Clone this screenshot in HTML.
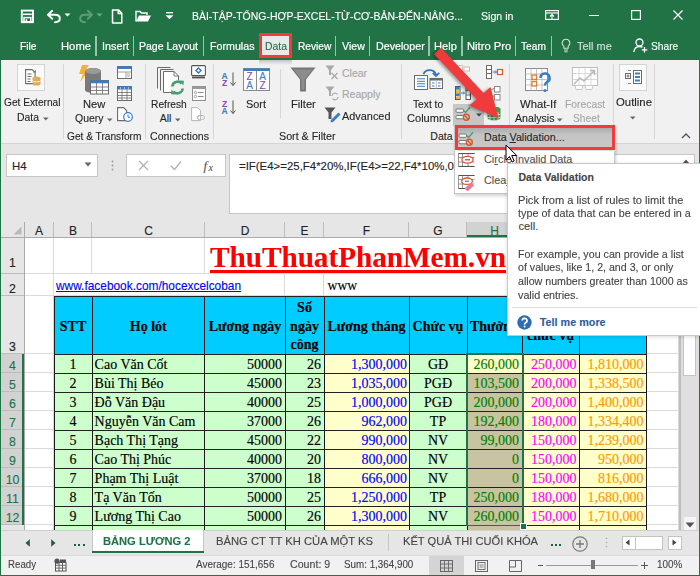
<!DOCTYPE html>
<html><head><meta charset="utf-8"><style>
html,body{margin:0;padding:0;}
body{width:700px;height:576px;overflow:hidden;position:relative;background:#fff;font-family:"Liberation Sans",sans-serif;}
#r>div{position:absolute;}
#r>div{-webkit-text-stroke:0.12px currentColor;}
</style></head><body><div id="r">
<div style="left:0px;top:0px;width:700px;height:60px;background:#217346;"></div>
<svg style="position:absolute;left:20px;top:9px;" width="15" height="15" viewBox="0 0 15 15"><rect x="1.8" y="1.6" width="11.2" height="11.6" fill="none" stroke="#ffffff" stroke-width="1.9"/><path d="M3 5.3h8.8" stroke="#ffffff" stroke-width="1.6"/><rect x="4" y="8.6" width="6.8" height="4.2" fill="none" stroke="#ffffff" stroke-width="1.5"/><rect x="5.6" y="10.2" width="1.6" height="2.6" fill="#ffffff"/></svg>
<svg style="position:absolute;left:46px;top:9px;" width="16" height="15" viewBox="0 0 16 15"><path d="M6.2 1.8 L2 5.8 L6.2 9.8" fill="none" stroke="#ffffff" stroke-width="1.9" stroke-linecap="round" stroke-linejoin="round"/><path d="M2.5 5.8 H9 Q13.8 5.8 13.8 9.5 Q13.8 13.2 9 13.2" fill="none" stroke="#ffffff" stroke-width="1.9" stroke-linecap="round"/></svg>
<svg style="position:absolute;left:64px;top:13px;" width="7" height="4" viewBox="0 0 7 4"><path d="M0.5 0.5h6l-3 3z" fill="#ffffff"/></svg>
<svg style="position:absolute;left:78px;top:9px;" width="16" height="15" viewBox="0 0 16 15"><path d="M9.8 1.8 L14 5.8 L9.8 9.8" fill="none" stroke="#5e9d78" stroke-width="1.9" stroke-linecap="round" stroke-linejoin="round"/><path d="M13.5 5.8 H7 Q2.2 5.8 2.2 9.5 Q2.2 13.2 7 13.2" fill="none" stroke="#5e9d78" stroke-width="1.9" stroke-linecap="round"/></svg>
<svg style="position:absolute;left:96px;top:13px;" width="7" height="4" viewBox="0 0 7 4"><path d="M0.5 0.5h6l-3 3z" fill="#6fa786"/></svg>
<svg style="position:absolute;left:111px;top:9px;" width="12" height="15" viewBox="0 0 12 15"><path d="M1.5 0.9h6l3.3 3.3v9.9h-9.3z M7.2 0.9v3.6h3.6" fill="none" stroke="#ffffff" stroke-width="1.5" stroke-linejoin="round"/></svg>
<svg style="position:absolute;left:135px;top:9px;" width="17" height="14" viewBox="0 0 17 14"><path d="M1 12.5V2.5h4l1.5 1.5h5.5v2" fill="none" stroke="#ffffff" stroke-width="1.4"/><path d="M1 12.5l3-6h12l-3 6z" fill="#ffffff"/></svg>
<svg style="position:absolute;left:165px;top:12px;" width="9" height="8" viewBox="0 0 9 8"><rect x="1" y="0" width="7" height="1.4" fill="#ffffff"/><path d="M0.5 3.2h8l-4 4z" fill="#ffffff"/></svg>
<div style="left:192px;top:11.19px;font:normal 11px/11px 'Liberation Sans',sans-serif;color:#ffffff;white-space:nowrap;transform:scaleX(0.9511);transform-origin:0 0;">BÀI-TẬP-TỔNG-HỢP-EXCEL-TỪ-CƠ-BẢN-ĐẾN-NÂNG...</div>
<div style="left:481px;top:11.19px;font:normal 11px/11px 'Liberation Sans',sans-serif;color:#ffffff;white-space:nowrap;transform:scaleX(0.9663);transform-origin:0 0;">Sign in</div>
<svg style="position:absolute;left:545px;top:10px;" width="14" height="10" viewBox="0 0 14 10"><rect x="0.6" y="0.6" width="12.8" height="8.8" fill="none" stroke="#ffffff" stroke-width="1.2"/><line x1="0.6" y1="3" x2="13.4" y2="3" stroke="#ffffff" stroke-width="1.2"/><path d="M7 4.5v4.5 M5 6.5l2-2 2 2" stroke="#ffffff" stroke-width="1.1" fill="none"/></svg>
<div style="left:589px;top:14.5px;width:10px;height:1.2px;background:#ffffff;"></div>
<svg style="position:absolute;left:631px;top:10px;" width="10" height="10" viewBox="0 0 10 10"><rect x="0.6" y="0.6" width="8.8" height="8.8" fill="none" stroke="#ffffff" stroke-width="1.2"/></svg>
<svg style="position:absolute;left:673px;top:10px;" width="10" height="10" viewBox="0 0 10 10"><path d="M0.5 0.5l9 9 M9.5 0.5l-9 9" stroke="#ffffff" stroke-width="1.2"/></svg>
<div style="left:19.5px;top:41.19px;font:normal 11px/11px 'Liberation Sans',sans-serif;color:#ffffff;white-space:nowrap;transform:scaleX(0.9309);transform-origin:0 0;-webkit-text-stroke:0.2px #fff;">File</div>
<div style="left:61.3px;top:41.19px;font:normal 11px/11px 'Liberation Sans',sans-serif;color:#ffffff;white-space:nowrap;transform:scaleX(1.0224);transform-origin:0 0;-webkit-text-stroke:0.2px #fff;">Home</div>
<div style="left:101.8px;top:41.19px;font:normal 11px/11px 'Liberation Sans',sans-serif;color:#ffffff;white-space:nowrap;transform:scaleX(0.9814);transform-origin:0 0;-webkit-text-stroke:0.2px #fff;">Insert</div>
<div style="left:139.3px;top:41.19px;font:normal 11px/11px 'Liberation Sans',sans-serif;color:#ffffff;white-space:nowrap;transform:scaleX(0.9551);transform-origin:0 0;-webkit-text-stroke:0.2px #fff;">Page Layout</div>
<div style="left:209.5px;top:41.19px;font:normal 11px/11px 'Liberation Sans',sans-serif;color:#ffffff;white-space:nowrap;transform:scaleX(0.9707);transform-origin:0 0;-webkit-text-stroke:0.2px #fff;">Formulas</div>
<div style="left:297.5px;top:41.19px;font:normal 11px/11px 'Liberation Sans',sans-serif;color:#ffffff;white-space:nowrap;transform:scaleX(0.9233);transform-origin:0 0;-webkit-text-stroke:0.2px #fff;">Review</div>
<div style="left:342px;top:41.19px;font:normal 11px/11px 'Liberation Sans',sans-serif;color:#ffffff;white-space:nowrap;transform:scaleX(0.9647);transform-origin:0 0;-webkit-text-stroke:0.2px #fff;">View</div>
<div style="left:375.7px;top:41.19px;font:normal 11px/11px 'Liberation Sans',sans-serif;color:#ffffff;white-space:nowrap;transform:scaleX(0.9733);transform-origin:0 0;-webkit-text-stroke:0.2px #fff;">Developer</div>
<div style="left:433.7px;top:41.19px;font:normal 11px/11px 'Liberation Sans',sans-serif;color:#ffffff;white-space:nowrap;transform:scaleX(1.0078);transform-origin:0 0;-webkit-text-stroke:0.2px #fff;">Help</div>
<div style="left:466.6px;top:41.19px;font:normal 11px/11px 'Liberation Sans',sans-serif;color:#ffffff;white-space:nowrap;transform:scaleX(1.0185);transform-origin:0 0;-webkit-text-stroke:0.2px #fff;">Nitro Pro</div>
<div style="left:520.9px;top:41.19px;font:normal 11px/11px 'Liberation Sans',sans-serif;color:#ffffff;white-space:nowrap;transform:scaleX(0.9247);transform-origin:0 0;-webkit-text-stroke:0.2px #fff;">Team</div>
<div style="left:95.3px;top:35.5px;width:1.4px;height:20px;background:#9cc2ab;"></div>
<div style="left:133.10000000000002px;top:35.5px;width:1.4px;height:20px;background:#9cc2ab;"></div>
<div style="left:203.10000000000002px;top:35.5px;width:1.4px;height:20px;background:#9cc2ab;"></div>
<div style="left:335.1px;top:35.5px;width:1.4px;height:20px;background:#9cc2ab;"></div>
<div style="left:368.90000000000003px;top:35.5px;width:1.4px;height:20px;background:#9cc2ab;"></div>
<div style="left:428.40000000000003px;top:35.5px;width:1.4px;height:20px;background:#9cc2ab;"></div>
<div style="left:461.2px;top:35.5px;width:1.4px;height:20px;background:#9cc2ab;"></div>
<div style="left:515.0px;top:35.5px;width:1.4px;height:20px;background:#9cc2ab;"></div>
<div style="left:551.0999999999999px;top:35.5px;width:1.4px;height:20px;background:#9cc2ab;"></div>
<div style="left:259px;top:33px;width:33px;height:25px;background:#e9e9e9;box-shadow:inset 0 0 3px #fafafa;"></div>
<div style="left:265px;top:41.19px;font:normal 11px/11px 'Liberation Sans',sans-serif;color:#217346;white-space:nowrap;transform:scaleX(0.9468);transform-origin:0 0;">Data</div>
<div style="left:258.5px;top:32.8px;width:33.5px;height:25.2px;background:none;border:3px solid #f43b3b;box-sizing:border-box;"></div>
<svg style="position:absolute;left:561px;top:38px;" width="10" height="15" viewBox="0 0 10 15"><path d="M5 1.2a3.8 3.8 0 0 0-2.2 6.9v2.2h4.4v-2.2A3.8 3.8 0 0 0 5 1.2z" fill="none" stroke="#d2e3d9" stroke-width="1.1"/><path d="M3 12h4 M3.5 13.8h3" stroke="#d2e3d9" stroke-width="1.1"/></svg>
<div style="left:576.5px;top:41.19px;font:normal 11px/11px 'Liberation Sans',sans-serif;color:#cfe0d6;white-space:nowrap;transform:scaleX(0.9983);transform-origin:0 0;">Tell me</div>
<svg style="position:absolute;left:633px;top:38px;" width="15" height="15" viewBox="0 0 15 15"><circle cx="6.5" cy="4.5" r="3.5" fill="none" stroke="#ffffff" stroke-width="1.3"/><path d="M0.8 14c0.5-3.5 2.8-5.5 5.7-5.5 1.2 0 2.2 0.3 3 0.8" fill="none" stroke="#ffffff" stroke-width="1.3"/><path d="M11.5 9v5.5 M8.8 11.8h5.5" stroke="#ffffff" stroke-width="1.3"/></svg>
<div style="left:650.6px;top:41.19px;font:normal 11px/11px 'Liberation Sans',sans-serif;color:#ffffff;white-space:nowrap;transform:scaleX(0.9267);transform-origin:0 0;">Share</div>
<div style="left:0px;top:60px;width:700px;height:83px;background:#f1f1f1;"></div>
<div style="left:0px;top:143px;width:700px;height:1px;background:#d5d5d5;"></div>
<div style="left:259px;top:60px;width:33px;height:5px;background:linear-gradient(#c4c4c4, rgba(241,241,241,0));"></div>
<div style="left:63.3px;top:64px;width:1px;height:75px;background:#d6d6d6;"></div>
<div style="left:145.3px;top:64px;width:1px;height:75px;background:#d6d6d6;"></div>
<div style="left:213px;top:64px;width:1px;height:75px;background:#d6d6d6;"></div>
<div style="left:400.6px;top:64px;width:1px;height:75px;background:#d6d6d6;"></div>
<div style="left:508.7px;top:64px;width:1px;height:75px;background:#d6d6d6;"></div>
<div style="left:612.7px;top:64px;width:1px;height:75px;background:#d6d6d6;"></div>
<div style="left:654.3px;top:64px;width:1px;height:75px;background:#d6d6d6;"></div>
<div style="left:279.5px;top:69px;width:1px;height:49px;background:#d6d6d6;"></div>
<div style="left:17px;top:63.5px;width:28px;height:27.5px;background:#fafafa;border:1px solid #d4d4d4;box-sizing:border-box;"></div>
<svg style="position:absolute;left:25px;top:69px;" width="16" height="17" viewBox="0 0 16 17"><path d="M0.6 0.6h6.5l3 3v11h-9.5z" fill="#fff" stroke="#6b6b6b" stroke-width="1.1"/><path d="M2.5 5h4 M2.5 7.5h4 M2.5 10h3 M2.5 12.5h3" stroke="#6b6b6b" stroke-width="1"/><path d="M8 3.5l2.5-2 v2" fill="none" stroke="#6b6b6b" stroke-width="0.8"/><ellipse cx="11.5" cy="9" rx="4" ry="1.6" fill="#e3aa58"/><path d="M7.5 9v6a4 1.6 0 0 0 8 0v-6z" fill="#e3aa58"/><path d="M7.5 11.5a4 1.4 0 0 0 8 0" fill="none" stroke="#fff" stroke-width="0.8"/></svg>
<div style="left:3.6px;top:97.11px;font:normal 10.5px/10.5px 'Liberation Sans',sans-serif;color:#262626;white-space:nowrap;transform:scaleX(0.9681);transform-origin:0 0;">Get External</div>
<div style="left:17.2px;top:111.61px;font:normal 10.5px/10.5px 'Liberation Sans',sans-serif;color:#262626;white-space:nowrap;transform:scaleX(0.9919);transform-origin:0 0;">Data</div>
<svg style="position:absolute;left:43px;top:116.5px;" width="6" height="4" viewBox="0 0 6 4"><path d="M0 0.5h5.5l-2.75 3z" fill="#666"/></svg>
<svg style="position:absolute;left:77px;top:64px;" width="33" height="31" viewBox="0 0 33 31"><path d="M5 1h7l-4 6h4l-9 11 3-8h-4z" fill="#f1b33b"/><ellipse cx="16" cy="7" rx="8" ry="3" fill="#7a7a7a"/><path d="M8 7v19a8 3 0 0 0 16 0v-19z" fill="#7a7a7a"/><ellipse cx="16" cy="7" rx="8" ry="3" fill="#9a9a9a"/><rect x="13.5" y="16.5" width="18" height="13.5" fill="#fff" stroke="#6b6b6b" stroke-width="1"/><rect x="13.5" y="16.5" width="18" height="2.8" fill="#3a7fc6"/><path d="M13.5 23h18 M13.5 26.5h18 M19.5 19v11 M25.5 19v11" stroke="#6b6b6b" stroke-width="0.8"/></svg>
<div style="left:82.7px;top:98.81px;font:normal 10.5px/10.5px 'Liberation Sans',sans-serif;color:#262626;white-space:nowrap;transform:scaleX(1.0616);transform-origin:0 0;">New</div>
<div style="left:75.3px;top:113.11px;font:normal 10.5px/10.5px 'Liberation Sans',sans-serif;color:#262626;white-space:nowrap;transform:scaleX(0.9967);transform-origin:0 0;">Query</div>
<svg style="position:absolute;left:106.5px;top:117.5px;" width="6" height="4" viewBox="0 0 6 4"><path d="M0 0.5h5.5l-2.75 3z" fill="#666"/></svg>
<svg style="position:absolute;left:117px;top:66px;" width="15" height="13" viewBox="0 0 15 13"><rect x="0.5" y="0.5" width="14" height="12" fill="#fff" stroke="#6b6b6b"/><rect x="0.5" y="0.5" width="14" height="2.5" fill="#3a7fc6"/><path d="M1 6h13 M9 6v6 M10 8h3 M10 10h3" stroke="#8a8a8a" stroke-width="0.8"/></svg>
<svg style="position:absolute;left:117px;top:86px;" width="15" height="15" viewBox="0 0 15 15"><rect x="0.5" y="0.5" width="14" height="14" fill="#fff" stroke="#6b6b6b"/><rect x="0.5" y="0.5" width="14" height="3" fill="#3a7fc6"/><path d="M1 6.5h13 M1 9.5h13 M1 12h13 M5 3.5v11 M10 3.5v11" stroke="#6b6b6b" stroke-width="0.8"/><path d="M3 2h1 M7 2h1 M11 2h1" stroke="#fff"/></svg>
<svg style="position:absolute;left:117px;top:107px;" width="16" height="15" viewBox="0 0 16 15"><path d="M0.6 0.6h6l3 3v10h-9z" fill="#fff" stroke="#6b6b6b" stroke-width="1.1"/><circle cx="11" cy="10" r="4.3" fill="#fff" stroke="#3a7fc6" stroke-width="1.2"/><path d="M11 7.5v2.7h2" fill="none" stroke="#3a7fc6" stroke-width="1"/></svg>
<div style="left:67px;top:131.11px;font:normal 10.5px/10.5px 'Liberation Sans',sans-serif;color:#262626;white-space:nowrap;transform:scaleX(0.9665);transform-origin:0 0;">Get &amp; Transform</div>
<svg style="position:absolute;left:156px;top:66px;" width="30" height="30" viewBox="0 0 30 30"><path d="M1.5 22.5V1.5h13" fill="none" stroke="#6b6b6b" stroke-width="1"/><path d="M4.5 24.5V3.5h13" fill="none" stroke="#6b6b6b" stroke-width="1"/><path d="M7.5 26.5V5.5h10.5l4.5 4.5v16.5z" fill="#fff" stroke="#6b6b6b" stroke-width="1"/><path d="M18 5.5v4.5h4.5" fill="none" stroke="#6b6b6b" stroke-width="0.9"/><circle cx="21.5" cy="21.5" r="7.5" fill="#f1f1f1"/><path d="M16.3 20.5a5.3 5.3 0 0 1 9.3-3" fill="none" stroke="#4a9a78" stroke-width="2.6"/><path d="M23.5 14.5l4.5 0.3-0.6 4.6z" fill="#4a9a78"/><path d="M26.7 22.5a5.3 5.3 0 0 1-9.3 3" fill="none" stroke="#4a9a78" stroke-width="2.6"/><path d="M19.5 28.5l-4.5-0.3 0.6-4.6z" fill="#4a9a78"/></svg>
<div style="left:150.7px;top:98.81px;font:normal 10.5px/10.5px 'Liberation Sans',sans-serif;color:#262626;white-space:nowrap;transform:scaleX(0.9737);transform-origin:0 0;">Refresh</div>
<div style="left:150.5px;width:30px;text-align:center;top:113.11px;font:normal 10.5px/10.5px 'Liberation Sans',sans-serif;color:#262626;white-space:nowrap;">All</div>
<svg style="position:absolute;left:174.5px;top:117.5px;" width="6" height="4" viewBox="0 0 6 4"><path d="M0 0.5h5.5l-2.75 3z" fill="#666"/></svg>
<svg style="position:absolute;left:191px;top:65px;" width="15" height="14" viewBox="0 0 15 14"><rect x="0.6" y="0.6" width="13.8" height="10" rx="1" fill="#fff" stroke="#555" stroke-width="1.1"/><path d="M1 12.5h13" stroke="#555" stroke-width="1.8"/><path d="M7.5 3l2.5 2.5-2.5 2.5-2.5-2.5z" fill="none" stroke="#2f74c0" stroke-width="1.4"/></svg>
<svg style="position:absolute;left:192px;top:86px;" width="14" height="15" viewBox="0 0 14 15"><rect x="0.5" y="0.5" width="13" height="14" fill="#fff" stroke="#8f8f8f"/><rect x="0.5" y="0.5" width="13" height="2.5" fill="#9a9a9a"/><circle cx="3.5" cy="6.5" r="1.2" fill="none" stroke="#9a9a9a" stroke-width="0.9"/><circle cx="3.5" cy="10.5" r="1.2" fill="none" stroke="#9a9a9a" stroke-width="0.9"/><path d="M6 6.5h5.5 M6 10.5h5.5" stroke="#8a8a8a" stroke-width="1.1"/></svg>
<svg style="position:absolute;left:191px;top:107px;" width="15" height="15" viewBox="0 0 15 15"><path d="M0.6 0.6h6l3 3v10h-9z" fill="#fff" stroke="#b5b5b5" stroke-width="1"/><path d="M7 10.5a2 2 0 0 1 2-2h2.5a2 2 0 0 1 0 4h-1 M9.5 12.5h-1a2 2 0 0 1 0-4" fill="none" stroke="#b5b5b5" stroke-width="1"/></svg>
<div style="left:149.5px;top:131.11px;font:normal 10.5px/10.5px 'Liberation Sans',sans-serif;color:#262626;white-space:nowrap;transform:scaleX(1.0108);transform-origin:0 0;">Connections</div>
<div style="left:218.5px;width:12px;text-align:center;top:71.80px;font:bold 8.5px/8.5px 'Liberation Sans',sans-serif;color:#3a7fc6;white-space:nowrap;">A</div>
<div style="left:218.5px;width:12px;text-align:center;top:78.80px;font:bold 8.5px/8.5px 'Liberation Sans',sans-serif;color:#8a4bb5;white-space:nowrap;">Z</div>
<svg style="position:absolute;left:229.5px;top:72px;" width="6" height="15" viewBox="0 0 6 15"><path d="M3 0.5v13 M0.5 10.5l2.5 3 2.5-3" fill="none" stroke="#555" stroke-width="1"/></svg>
<div style="left:218.5px;width:12px;text-align:center;top:99.80px;font:bold 8.5px/8.5px 'Liberation Sans',sans-serif;color:#8a4bb5;white-space:nowrap;">Z</div>
<div style="left:218.5px;width:12px;text-align:center;top:106.80px;font:bold 8.5px/8.5px 'Liberation Sans',sans-serif;color:#3a7fc6;white-space:nowrap;">A</div>
<svg style="position:absolute;left:229.5px;top:100px;" width="6" height="15" viewBox="0 0 6 15"><path d="M3 0.5v13 M0.5 10.5l2.5 3 2.5-3" fill="none" stroke="#555" stroke-width="1"/></svg>
<svg style="position:absolute;left:242.5px;top:68px;" width="27" height="23" viewBox="0 0 27 23"><rect x="0.5" y="0.5" width="26" height="22" fill="#fff" stroke="#8a8a8a"/><rect x="0.5" y="0.5" width="26" height="2.5" fill="#3a7fc6"/><line x1="13.5" y1="3" x2="13.5" y2="22.5" stroke="#8a8a8a"/></svg>
<div style="left:243.5px;width:12px;text-align:center;top:71.53px;font:normal 10px/10px 'Liberation Sans',sans-serif;color:#8a4bb5;white-space:nowrap;">Z</div>
<div style="left:243.5px;width:12px;text-align:center;top:81.03px;font:normal 10px/10px 'Liberation Sans',sans-serif;color:#3a7fc6;white-space:nowrap;">A</div>
<div style="left:256.5px;width:12px;text-align:center;top:71.53px;font:normal 10px/10px 'Liberation Sans',sans-serif;color:#3a7fc6;white-space:nowrap;">A</div>
<div style="left:256.5px;width:12px;text-align:center;top:81.03px;font:normal 10px/10px 'Liberation Sans',sans-serif;color:#8a4bb5;white-space:nowrap;">Z</div>
<div style="left:246px;top:98.81px;font:normal 10.5px/10.5px 'Liberation Sans',sans-serif;color:#262626;white-space:nowrap;transform:scaleX(1.0386);transform-origin:0 0;">Sort</div>
<svg style="position:absolute;left:290px;top:67px;" width="26" height="25" viewBox="0 0 26 25"><path d="M0.5 0.5h25l-9.5 12v12h-6v-12z" fill="#777"/><path d="M3.5 2.5h19l-8 10v10h-3v-10z" fill="#8c8c8c"/></svg>
<div style="left:290.8px;top:98.81px;font:normal 10.5px/10.5px 'Liberation Sans',sans-serif;color:#262626;white-space:nowrap;transform:scaleX(1.0629);transform-origin:0 0;">Filter</div>
<svg style="position:absolute;left:325px;top:65px;" width="15" height="15" viewBox="0 0 15 15"><path d="M0.5 0.5h9l-3.5 4.5v5h-2v-5z" fill="#a9a9a9"/><path d="M6.5 8l6 6 M12.5 8l-6 6" stroke="#a9a9a9" stroke-width="1.3"/></svg>
<div style="left:342px;top:68.11px;font:normal 10.5px/10.5px 'Liberation Sans',sans-serif;color:#a6a6a6;white-space:nowrap;">Clear</div>
<svg style="position:absolute;left:325px;top:86px;" width="15" height="15" viewBox="0 0 15 15"><path d="M0.5 0.5h9l-3.5 4.5v5h-2v-5z" fill="#a9a9a9"/><path d="M7 10a3 3 0 0 1 5.5-1.5 M13 11a3 3 0 0 1-5.5 1.5" fill="none" stroke="#a9a9a9" stroke-width="1.2"/></svg>
<div style="left:342px;top:89.41px;font:normal 10.5px/10.5px 'Liberation Sans',sans-serif;color:#a6a6a6;white-space:nowrap;">Reapply</div>
<svg style="position:absolute;left:324px;top:107px;" width="17" height="16" viewBox="0 0 17 16"><path d="M0.5 0.5h11l-4 5v6.5h-3v-6.5z" fill="#555"/><path d="M15.5 6.5l-8 8" stroke="#3a7fc6" stroke-width="3"/><path d="M6.5 15.5l0.8-2.5 1.7 1.7z" fill="#3a7fc6"/></svg>
<div style="left:342px;top:110.91px;font:normal 10.5px/10.5px 'Liberation Sans',sans-serif;color:#262626;white-space:nowrap;transform:scaleX(1.0385);transform-origin:0 0;">Advanced</div>
<div style="left:278.5px;top:131.11px;font:normal 10.5px/10.5px 'Liberation Sans',sans-serif;color:#262626;white-space:nowrap;transform:scaleX(1.0193);transform-origin:0 0;">Sort &amp; Filter</div>
<svg style="position:absolute;left:413px;top:66px;" width="31" height="24" viewBox="0 0 31 24"><path d="M10.5 8.2a6.5 6 0 0 1 12.5 0.8" fill="none" stroke="#2f74c0" stroke-width="1.8"/><path d="M19.8 6.8l3.2 3.2 3.2-3.2" fill="none" stroke="#2f74c0" stroke-width="1.8"/><rect x="1.5" y="9.5" width="13" height="14" fill="#fff" stroke="#6b6b6b"/><path d="M4 12.8h8 M4 15.3h8 M4 17.8h8 M4 20.3h8" stroke="#3a7fc6" stroke-width="1"/><rect x="17" y="12.5" width="12.5" height="10" fill="#fff" stroke="#6b6b6b"/><rect x="17" y="12.5" width="12.5" height="2" fill="#6b6b6b"/><path d="M23.25 14.5v8" stroke="#c0c0c0" stroke-width="1"/><path d="M19 17h2.5 M19 20h2.5 M25 17h2.5 M25 20h2.5" stroke="#3a7fc6" stroke-width="1"/></svg>
<div style="left:413.1px;top:98.81px;font:normal 10.5px/10.5px 'Liberation Sans',sans-serif;color:#262626;white-space:nowrap;transform:scaleX(0.9752);transform-origin:0 0;">Text to</div>
<div style="left:406.6px;top:113.11px;font:normal 10.5px/10.5px 'Liberation Sans',sans-serif;color:#262626;white-space:nowrap;transform:scaleX(1.0548);transform-origin:0 0;">Columns</div>
<div style="left:430.3px;top:131.11px;font:normal 10.5px/10.5px 'Liberation Sans',sans-serif;color:#262626;white-space:nowrap;">Data</div>
<svg style="position:absolute;left:455px;top:65px;" width="15" height="9" viewBox="0 0 15 9"><rect x="0.5" y="0.5" width="7" height="8" fill="#fff" stroke="#c5c5c5"/><rect x="9" y="2" width="5.5" height="4" fill="#fff" stroke="#e0b0a0"/></svg>
<svg style="position:absolute;left:455px;top:86px;" width="16" height="14" viewBox="0 0 16 14"><rect x="0.5" y="0.5" width="4.5" height="13" fill="#fff" stroke="#555"/><rect x="1" y="1" width="3.5" height="2.7" fill="#3a7fc6"/><rect x="1" y="4.2" width="3.5" height="2.7" fill="#e8b04a"/><rect x="1" y="7.3" width="3.5" height="2.7" fill="#3a7fc6"/><rect x="1" y="10.4" width="3.5" height="2.7" fill="#e8b04a"/><path d="M6 7h3.5 M8 5.5l1.5 1.5-1.5 1.5" stroke="#3a7fc6" fill="none"/><rect x="11" y="0.5" width="4.5" height="13" fill="#fff" stroke="#555"/><rect x="11.5" y="1" width="3.5" height="3" fill="#c8a050"/><path d="M11 4.5h4.5 M11 9h4.5" stroke="#555" stroke-width="0.8"/></svg>
<div style="left:453px;top:104px;width:31px;height:21.5px;background:#c6c6c6;"></div>
<svg style="position:absolute;left:455px;top:106px;" width="17" height="15" viewBox="0 0 17 15"><rect x="1" y="3" width="7.5" height="3.3" rx="1" fill="#fff" stroke="#6b6b6b" stroke-width="0.9"/><rect x="1" y="9.5" width="7.5" height="3.3" rx="1" fill="#fff" stroke="#6b6b6b" stroke-width="0.9"/><path d="M8.3 4.3l2.2 2.2 4.6-5.2" fill="none" stroke="#4aa073" stroke-width="1.5"/><circle cx="11.3" cy="11.2" r="3" fill="none" stroke="#d9582b" stroke-width="1.4"/><path d="M9.3 9.2l4 4" stroke="#d9582b" stroke-width="1.3"/></svg>
<svg style="position:absolute;left:475.5px;top:113px;" width="7" height="4" viewBox="0 0 7 4"><path d="M0 0.5h6l-3 3z" fill="#444"/></svg>
<svg style="position:absolute;left:486px;top:65px;" width="17" height="14" viewBox="0 0 17 14"><rect x="0.5" y="0.5" width="5" height="13" fill="#fff" stroke="#6b6b6b"/><path d="M0.5 4.5h5 M0.5 8.5h5" stroke="#6b6b6b"/><path d="M6.5 7h4 M9 5.5l1.5 1.5-1.5 1.5" stroke="#3a7fc6" fill="none"/><rect x="11.5" y="4.5" width="5" height="5" fill="#fff" stroke="#d9582b" stroke-width="1.2"/></svg>
<svg style="position:absolute;left:486px;top:86px;" width="17" height="15" viewBox="0 0 17 15"><rect x="8.5" y="0.5" width="5.5" height="5.5" fill="#fff" stroke="#8a8a8a"/><rect x="8.5" y="8.5" width="5.5" height="5.5" fill="#fff" stroke="#8a8a8a"/><path d="M2 6l6.5-4 M2 6l6.5 5" stroke="#8a8a8a" fill="none"/></svg>
<svg style="position:absolute;left:486px;top:106px;" width="16" height="15" viewBox="0 0 16 15"><ellipse cx="8" cy="3" rx="6.5" ry="2.3" fill="#3c9c4b"/><path d="M1.5 3v9a6.5 2.3 0 0 0 13 0v-9z" fill="#3c9c4b"/><path d="M4 6v8 M8 6.5v8 M12 6v8 M1.5 8.5h13 M1.5 11.5h13" stroke="#c7e3c9" stroke-width="0.9"/></svg>
<svg style="position:absolute;left:525px;top:68px;" width="26" height="27" viewBox="0 0 26 27"><rect x="0.5" y="0.5" width="22" height="22" fill="#fff" stroke="#8a8a8a"/><path d="M0.5 6h22 M0.5 11.5h22 M0.5 17h22 M6 0.5v22 M11.5 0.5v22 M17 0.5v22" stroke="#b5b5b5" stroke-width="0.8"/><rect x="7" y="7" width="4.5" height="4.5" fill="#fff" stroke="#e07b2e" stroke-width="1.3"/><rect x="7" y="13.5" width="4.5" height="4.5" fill="#fff" stroke="#e07b2e" stroke-width="1.3"/><path d="M15.5 10a4.5 4.5 0 1 1 6.5 4c-1.5 1-2 2-2 3.5" fill="none" stroke="#3a7fc6" stroke-width="2.6"/><circle cx="20" cy="22.5" r="1.6" fill="#3a7fc6"/></svg>
<div style="left:520.2px;top:98.81px;font:normal 10.5px/10.5px 'Liberation Sans',sans-serif;color:#262626;white-space:nowrap;transform:scaleX(1.0728);transform-origin:0 0;">What-If</div>
<div style="left:514.6px;top:113.11px;font:normal 10.5px/10.5px 'Liberation Sans',sans-serif;color:#262626;white-space:nowrap;transform:scaleX(1.0103);transform-origin:0 0;">Analysis</div>
<svg style="position:absolute;left:556.5px;top:117.5px;" width="6" height="4" viewBox="0 0 6 4"><path d="M0 0.5h5.5l-2.75 3z" fill="#666"/></svg>
<svg style="position:absolute;left:572px;top:67px;" width="27" height="24" viewBox="0 0 27 24"><rect x="0.5" y="0.5" width="25" height="18" fill="#fff" stroke="#bdbdbd"/><path d="M0.5 6.5h25 M0.5 12.5h25 M7 0.5v18 M13 0.5v18 M19 0.5v18" stroke="#d0d0d0" stroke-width="0.8"/><path d="M2 17l6-6 4 3 10-10 M18 3.5h4.5v4.5" fill="none" stroke="#b9b9b9" stroke-width="1.5"/><path d="M3 18.5h8l-1 4h-6z M13 18.5h8l-1 4h-6z" fill="#fff" stroke="#c8c8c8"/></svg>
<div style="left:565.3px;top:98.81px;font:normal 10.5px/10.5px 'Liberation Sans',sans-serif;color:#a6a6a6;white-space:nowrap;transform:scaleX(0.9842);transform-origin:0 0;">Forecast</div>
<div style="left:572.7px;top:113.11px;font:normal 10.5px/10.5px 'Liberation Sans',sans-serif;color:#a6a6a6;white-space:nowrap;transform:scaleX(0.9767);transform-origin:0 0;">Sheet</div>
<div style="left:619px;top:63.5px;width:28px;height:27px;background:#fafafa;border:1px solid #d4d4d4;box-sizing:border-box;"></div>
<svg style="position:absolute;left:625px;top:70px;" width="17" height="14" viewBox="0 0 17 14"><rect x="0.5" y="3.5" width="5" height="5" fill="#fff" stroke="#6b6b6b"/><path d="M1.5 6h3 M3 4.5v3" stroke="#6b6b6b"/><path d="M3 0.5h3 M3 13.5h3" stroke="#8a8a8a"/><rect x="8.5" y="0.5" width="8" height="13" fill="#fff" stroke="#6b6b6b"/><rect x="10" y="2.5" width="5" height="2" fill="#3a7fc6"/><rect x="10" y="6" width="5" height="2" fill="#3a7fc6"/><rect x="10" y="9.5" width="5" height="2" fill="#3a7fc6"/></svg>
<div style="left:615.7px;top:97.11px;font:normal 10.5px/10.5px 'Liberation Sans',sans-serif;color:#262626;white-space:nowrap;transform:scaleX(1.0821);transform-origin:0 0;">Outline</div>
<svg style="position:absolute;left:630px;top:115.5px;" width="6" height="4" viewBox="0 0 6 4"><path d="M0 0.5h5.5l-2.75 3z" fill="#666"/></svg>
<svg style="position:absolute;left:681px;top:133px;" width="10" height="6" viewBox="0 0 10 6"><path d="M1 5l4-4 4 4" fill="none" stroke="#555" stroke-width="1.3"/></svg>
<div style="left:0px;top:60px;width:1px;height:516px;background:#217346;"></div>
<div style="left:699px;top:60px;width:1px;height:516px;background:#217346;"></div>
<div style="left:1px;top:144px;width:698px;height:78px;background:#e6e6e6;"></div>
<div style="left:5.5px;top:153.5px;width:92.5px;height:23px;background:#fff;border:1px solid #c6c6c6;box-sizing:border-box;"></div>
<div style="left:12px;top:160.85px;font:normal 11.4px/11.4px 'Liberation Sans',sans-serif;color:#222;white-space:nowrap;">H4</div>
<svg style="position:absolute;left:84px;top:162px;" width="8" height="5" viewBox="0 0 8 5"><path d="M0.5 0.5h7l-3.5 4z" fill="#666"/></svg>
<svg style="position:absolute;left:110.5px;top:160px;" width="3" height="11" viewBox="0 0 3 11"><circle cx="1.5" cy="1.5" r="0.9" fill="#9a9a9a"/><circle cx="1.5" cy="5.5" r="0.9" fill="#9a9a9a"/><circle cx="1.5" cy="9.5" r="0.9" fill="#9a9a9a"/></svg>
<div style="left:125.5px;top:153.5px;width:100px;height:23px;background:#fff;border:1px solid #c6c6c6;box-sizing:border-box;"></div>
<svg style="position:absolute;left:138px;top:159.5px;" width="11" height="11" viewBox="0 0 11 11"><path d="M1 1l9 9 M10 1l-9 9" stroke="#b0b0b0" stroke-width="1.2"/></svg>
<svg style="position:absolute;left:170px;top:159.5px;" width="12" height="11" viewBox="0 0 12 11"><path d="M1 6l3.5 3.5 6.5-8" fill="none" stroke="#b0b0b0" stroke-width="1.3"/></svg>
<div style="left:203.5px;top:159.11px;font:normal 13px/13px 'Liberation Serif',serif;color:#555;white-space:nowrap;"><i>f</i></div>
<div style="left:208.5px;top:162.62px;font:normal 10px/10px 'Liberation Serif',serif;color:#555;white-space:nowrap;"><i>x</i></div>
<div style="left:228.5px;top:153.5px;width:466px;height:60px;background:#fff;border:1px solid #c6c6c6;box-sizing:border-box;"></div>
<div style="left:239px;top:161.32px;font:normal 11.43px/11.43px 'Liberation Sans',sans-serif;color:#222;white-space:nowrap;">=IF(E4&gt;=25,F4*20%,IF(E4&gt;=22,F4*10%,0))</div>
<svg style="position:absolute;left:682px;top:159px;" width="8" height="5" viewBox="0 0 8 5"><path d="M0.5 4.5l3.5-4 3.5 4z" fill="#555"/></svg>
<div style="left:1px;top:222px;width:678px;height:15px;background:#e6e6e6;"></div>
<div style="left:1px;top:237px;width:23px;height:293px;background:#e6e6e6;"></div>
<div style="left:24px;top:237px;width:655px;height:293px;background:#fff;"></div>
<div style="left:53px;top:237px;width:1px;height:293px;background:#dadada;"></div>
<div style="left:91px;top:237px;width:1px;height:37px;background:#dadada;"></div>
<div style="left:91px;top:296px;width:1px;height:234px;background:#dadada;"></div>
<div style="left:204px;top:237px;width:1px;height:37px;background:#dadada;"></div>
<div style="left:204px;top:296px;width:1px;height:234px;background:#dadada;"></div>
<div style="left:284px;top:274px;width:1px;height:256px;background:#dadada;"></div>
<div style="left:323px;top:274px;width:1px;height:256px;background:#dadada;"></div>
<div style="left:408px;top:296px;width:1px;height:234px;background:#dadada;"></div>
<div style="left:466px;top:296px;width:1px;height:234px;background:#dadada;"></div>
<div style="left:521px;top:237px;width:1px;height:293px;background:#dadada;"></div>
<div style="left:578px;top:237px;width:1px;height:293px;background:#dadada;"></div>
<div style="left:645px;top:237px;width:1px;height:293px;background:#dadada;"></div>
<div style="left:678px;top:237px;width:1px;height:293px;background:#dadada;"></div>
<div style="left:24px;top:273px;width:655px;height:1px;background:#dadada;"></div>
<div style="left:24px;top:295px;width:655px;height:1px;background:#dadada;"></div>
<div style="left:24px;top:353px;width:655px;height:1px;background:#dadada;"></div>
<div style="left:24px;top:372px;width:655px;height:1px;background:#dadada;"></div>
<div style="left:24px;top:391px;width:655px;height:1px;background:#dadada;"></div>
<div style="left:24px;top:410px;width:655px;height:1px;background:#dadada;"></div>
<div style="left:24px;top:429px;width:655px;height:1px;background:#dadada;"></div>
<div style="left:24px;top:448px;width:655px;height:1px;background:#dadada;"></div>
<div style="left:24px;top:467px;width:655px;height:1px;background:#dadada;"></div>
<div style="left:24px;top:486px;width:655px;height:1px;background:#dadada;"></div>
<div style="left:24px;top:505px;width:655px;height:1px;background:#dadada;"></div>
<div style="left:24px;top:524px;width:655px;height:1px;background:#dadada;"></div>
<div style="left:24px;top:543px;width:655px;height:1px;background:#dadada;"></div>
<div style="left:1px;top:236.5px;width:678px;height:1px;background:#ababab;"></div>
<div style="left:23.5px;top:222px;width:1px;height:308px;background:#ababab;"></div>
<div style="left:53px;top:222px;width:1px;height:15px;background:#bdbdbd;"></div>
<div style="left:24.0px;width:30px;text-align:center;top:224.84px;font:normal 12px/12px 'Liberation Sans',sans-serif;color:#222;white-space:nowrap;">A</div>
<div style="left:91px;top:222px;width:1px;height:15px;background:#bdbdbd;"></div>
<div style="left:54.0px;width:38px;text-align:center;top:224.84px;font:normal 12px/12px 'Liberation Sans',sans-serif;color:#222;white-space:nowrap;">B</div>
<div style="left:204px;top:222px;width:1px;height:15px;background:#bdbdbd;"></div>
<div style="left:92.0px;width:113px;text-align:center;top:224.84px;font:normal 12px/12px 'Liberation Sans',sans-serif;color:#222;white-space:nowrap;">C</div>
<div style="left:284px;top:222px;width:1px;height:15px;background:#bdbdbd;"></div>
<div style="left:205.0px;width:80px;text-align:center;top:224.84px;font:normal 12px/12px 'Liberation Sans',sans-serif;color:#222;white-space:nowrap;">D</div>
<div style="left:323px;top:222px;width:1px;height:15px;background:#bdbdbd;"></div>
<div style="left:285.0px;width:39px;text-align:center;top:224.84px;font:normal 12px/12px 'Liberation Sans',sans-serif;color:#222;white-space:nowrap;">E</div>
<div style="left:408px;top:222px;width:1px;height:15px;background:#bdbdbd;"></div>
<div style="left:324.0px;width:85px;text-align:center;top:224.84px;font:normal 12px/12px 'Liberation Sans',sans-serif;color:#222;white-space:nowrap;">F</div>
<div style="left:466px;top:222px;width:1px;height:15px;background:#bdbdbd;"></div>
<div style="left:409.0px;width:58px;text-align:center;top:224.84px;font:normal 12px/12px 'Liberation Sans',sans-serif;color:#222;white-space:nowrap;">G</div>
<div style="left:521px;top:222px;width:1px;height:15px;background:#bdbdbd;"></div>
<div style="left:467px;top:222px;width:54px;height:15px;background:#d2d2d2;"></div>
<div style="left:467px;top:235px;width:54px;height:2px;background:#217346;"></div>
<div style="left:467.0px;width:55px;text-align:center;top:224.84px;font:normal 12px/12px 'Liberation Sans',sans-serif;color:#217346;white-space:nowrap;">H</div>
<div style="left:578px;top:222px;width:1px;height:15px;background:#bdbdbd;"></div>
<div style="left:522.0px;width:57px;text-align:center;top:224.84px;font:normal 12px/12px 'Liberation Sans',sans-serif;color:#222;white-space:nowrap;">I</div>
<div style="left:645px;top:222px;width:1px;height:15px;background:#bdbdbd;"></div>
<div style="left:579.0px;width:67px;text-align:center;top:224.84px;font:normal 12px/12px 'Liberation Sans',sans-serif;color:#222;white-space:nowrap;">J</div>
<div style="left:678px;top:222px;width:1px;height:15px;background:#bdbdbd;"></div>
<div style="left:646.0px;width:33px;text-align:center;top:224.84px;font:normal 12px/12px 'Liberation Sans',sans-serif;color:#222;white-space:nowrap;">K</div>
<svg style="position:absolute;left:13px;top:226px;" width="9" height="9" viewBox="0 0 9 9"><path d="M8.5 0.5v8h-8z" fill="#b9b9b9"/></svg>
<div style="left:1px;top:273px;width:23px;height:1px;background:#bdbdbd;"></div>
<div style="left:1.5px;width:22px;text-align:center;top:257.09px;font:normal 12.3px/12.3px 'Liberation Sans',sans-serif;color:#222;white-space:nowrap;">1</div>
<div style="left:1px;top:295px;width:23px;height:1px;background:#bdbdbd;"></div>
<div style="left:1.5px;width:22px;text-align:center;top:282.59px;font:normal 12.3px/12.3px 'Liberation Sans',sans-serif;color:#222;white-space:nowrap;">2</div>
<div style="left:1px;top:353px;width:23px;height:1px;background:#bdbdbd;"></div>
<div style="left:1.5px;width:22px;text-align:center;top:340.59px;font:normal 12.3px/12.3px 'Liberation Sans',sans-serif;color:#222;white-space:nowrap;">3</div>
<div style="left:1px;top:372px;width:23px;height:1px;background:#bdbdbd;"></div>
<div style="left:1px;top:354px;width:22px;height:18px;background:#d2d2d2;"></div>
<div style="left:1.5px;width:22px;text-align:center;top:359.59px;font:normal 12.3px/12.3px 'Liberation Sans',sans-serif;color:#217346;white-space:nowrap;">4</div>
<div style="left:1px;top:391px;width:23px;height:1px;background:#bdbdbd;"></div>
<div style="left:1px;top:373px;width:22px;height:18px;background:#d2d2d2;"></div>
<div style="left:1.5px;width:22px;text-align:center;top:378.59px;font:normal 12.3px/12.3px 'Liberation Sans',sans-serif;color:#217346;white-space:nowrap;">5</div>
<div style="left:1px;top:410px;width:23px;height:1px;background:#bdbdbd;"></div>
<div style="left:1px;top:392px;width:22px;height:18px;background:#d2d2d2;"></div>
<div style="left:1.5px;width:22px;text-align:center;top:397.59px;font:normal 12.3px/12.3px 'Liberation Sans',sans-serif;color:#217346;white-space:nowrap;">6</div>
<div style="left:1px;top:429px;width:23px;height:1px;background:#bdbdbd;"></div>
<div style="left:1px;top:411px;width:22px;height:18px;background:#d2d2d2;"></div>
<div style="left:1.5px;width:22px;text-align:center;top:416.59px;font:normal 12.3px/12.3px 'Liberation Sans',sans-serif;color:#217346;white-space:nowrap;">7</div>
<div style="left:1px;top:448px;width:23px;height:1px;background:#bdbdbd;"></div>
<div style="left:1px;top:430px;width:22px;height:18px;background:#d2d2d2;"></div>
<div style="left:1.5px;width:22px;text-align:center;top:435.59px;font:normal 12.3px/12.3px 'Liberation Sans',sans-serif;color:#217346;white-space:nowrap;">8</div>
<div style="left:1px;top:467px;width:23px;height:1px;background:#bdbdbd;"></div>
<div style="left:1px;top:449px;width:22px;height:18px;background:#d2d2d2;"></div>
<div style="left:1.5px;width:22px;text-align:center;top:454.59px;font:normal 12.3px/12.3px 'Liberation Sans',sans-serif;color:#217346;white-space:nowrap;">9</div>
<div style="left:1px;top:486px;width:23px;height:1px;background:#bdbdbd;"></div>
<div style="left:1px;top:468px;width:22px;height:18px;background:#d2d2d2;"></div>
<div style="left:1.5px;width:22px;text-align:center;top:473.59px;font:normal 12.3px/12.3px 'Liberation Sans',sans-serif;color:#217346;white-space:nowrap;">10</div>
<div style="left:1px;top:505px;width:23px;height:1px;background:#bdbdbd;"></div>
<div style="left:1px;top:487px;width:22px;height:18px;background:#d2d2d2;"></div>
<div style="left:1.5px;width:22px;text-align:center;top:492.59px;font:normal 12.3px/12.3px 'Liberation Sans',sans-serif;color:#217346;white-space:nowrap;">11</div>
<div style="left:1px;top:524px;width:23px;height:1px;background:#bdbdbd;"></div>
<div style="left:1px;top:506px;width:22px;height:18px;background:#d2d2d2;"></div>
<div style="left:1.5px;width:22px;text-align:center;top:511.59px;font:normal 12.3px/12.3px 'Liberation Sans',sans-serif;color:#217346;white-space:nowrap;">12</div>
<div style="left:22px;top:354px;width:2px;height:171px;background:#217346;"></div>
<div style="left:54px;top:296px;width:592px;height:58px;background:#00ccff;"></div>
<div style="left:54px;top:354px;width:270px;height:19px;background:#ccffcc;"></div>
<div style="left:324px;top:354px;width:85px;height:19px;background:#ffffcc;"></div>
<div style="left:409px;top:354px;width:58px;height:19px;background:#ccffcc;"></div>
<div style="left:467px;top:354px;width:55px;height:19px;background:#ffffcc;"></div>
<div style="left:522px;top:354px;width:124px;height:19px;background:#ffffcc;"></div>
<div style="left:54px;top:373px;width:270px;height:19px;background:#ccffcc;"></div>
<div style="left:324px;top:373px;width:85px;height:19px;background:#ffffcc;"></div>
<div style="left:409px;top:373px;width:58px;height:19px;background:#ccffcc;"></div>
<div style="left:467px;top:373px;width:55px;height:19px;background:#c8c4a1;"></div>
<div style="left:522px;top:373px;width:124px;height:19px;background:#ffffcc;"></div>
<div style="left:54px;top:392px;width:270px;height:19px;background:#ccffcc;"></div>
<div style="left:324px;top:392px;width:85px;height:19px;background:#ffffcc;"></div>
<div style="left:409px;top:392px;width:58px;height:19px;background:#ccffcc;"></div>
<div style="left:467px;top:392px;width:55px;height:19px;background:#c8c4a1;"></div>
<div style="left:522px;top:392px;width:124px;height:19px;background:#ffffcc;"></div>
<div style="left:54px;top:411px;width:270px;height:19px;background:#ccffcc;"></div>
<div style="left:324px;top:411px;width:85px;height:19px;background:#ffffcc;"></div>
<div style="left:409px;top:411px;width:58px;height:19px;background:#ccffcc;"></div>
<div style="left:467px;top:411px;width:55px;height:19px;background:#c8c4a1;"></div>
<div style="left:522px;top:411px;width:124px;height:19px;background:#ffffcc;"></div>
<div style="left:54px;top:430px;width:270px;height:19px;background:#ccffcc;"></div>
<div style="left:324px;top:430px;width:85px;height:19px;background:#ffffcc;"></div>
<div style="left:409px;top:430px;width:58px;height:19px;background:#ccffcc;"></div>
<div style="left:467px;top:430px;width:55px;height:19px;background:#c8c4a1;"></div>
<div style="left:522px;top:430px;width:124px;height:19px;background:#ffffcc;"></div>
<div style="left:54px;top:449px;width:270px;height:19px;background:#ccffcc;"></div>
<div style="left:324px;top:449px;width:85px;height:19px;background:#ffffcc;"></div>
<div style="left:409px;top:449px;width:58px;height:19px;background:#ccffcc;"></div>
<div style="left:467px;top:449px;width:55px;height:19px;background:#c8c4a1;"></div>
<div style="left:522px;top:449px;width:124px;height:19px;background:#ffffcc;"></div>
<div style="left:54px;top:468px;width:270px;height:19px;background:#ccffcc;"></div>
<div style="left:324px;top:468px;width:85px;height:19px;background:#ffffcc;"></div>
<div style="left:409px;top:468px;width:58px;height:19px;background:#ccffcc;"></div>
<div style="left:467px;top:468px;width:55px;height:19px;background:#c8c4a1;"></div>
<div style="left:522px;top:468px;width:124px;height:19px;background:#ffffcc;"></div>
<div style="left:54px;top:487px;width:270px;height:19px;background:#ccffcc;"></div>
<div style="left:324px;top:487px;width:85px;height:19px;background:#ffffcc;"></div>
<div style="left:409px;top:487px;width:58px;height:19px;background:#ccffcc;"></div>
<div style="left:467px;top:487px;width:55px;height:19px;background:#c8c4a1;"></div>
<div style="left:522px;top:487px;width:124px;height:19px;background:#ffffcc;"></div>
<div style="left:54px;top:506px;width:270px;height:19px;background:#ccffcc;"></div>
<div style="left:324px;top:506px;width:85px;height:19px;background:#ffffcc;"></div>
<div style="left:409px;top:506px;width:58px;height:19px;background:#ccffcc;"></div>
<div style="left:467px;top:506px;width:55px;height:19px;background:#c8c4a1;"></div>
<div style="left:522px;top:506px;width:124px;height:19px;background:#ffffcc;"></div>
<div style="left:54px;top:525px;width:270px;height:5px;background:#ccffcc;"></div>
<div style="left:324px;top:525px;width:85px;height:5px;background:#ffffcc;"></div>
<div style="left:409px;top:525px;width:58px;height:5px;background:#ccffcc;"></div>
<div style="left:467px;top:525px;width:55px;height:5px;background:#c8c4a1;"></div>
<div style="left:522px;top:525px;width:124px;height:5px;background:#ffffcc;"></div>
<div style="left:53.5px;top:296px;width:1px;height:234px;background:#1a1a1a;"></div>
<div style="left:91.5px;top:296px;width:1px;height:234px;background:#1a1a1a;"></div>
<div style="left:203.5px;top:296px;width:1px;height:234px;background:#1a1a1a;"></div>
<div style="left:284.5px;top:296px;width:1px;height:234px;background:#1a1a1a;"></div>
<div style="left:323.5px;top:296px;width:1px;height:234px;background:#1a1a1a;"></div>
<div style="left:408.5px;top:296px;width:1px;height:234px;background:#1a1a1a;"></div>
<div style="left:466.5px;top:296px;width:1px;height:234px;background:#1a1a1a;"></div>
<div style="left:521.5px;top:296px;width:1px;height:234px;background:#1a1a1a;"></div>
<div style="left:578.5px;top:296px;width:1px;height:234px;background:#1a1a1a;"></div>
<div style="left:645.5px;top:296px;width:1px;height:234px;background:#1a1a1a;"></div>
<div style="left:54px;top:295.5px;width:592px;height:1.1px;background:#222;"></div>
<div style="left:54px;top:353.5px;width:592px;height:1.1px;background:#222;"></div>
<div style="left:54px;top:372.5px;width:592px;height:1.1px;background:#222;"></div>
<div style="left:54px;top:391.5px;width:592px;height:1.1px;background:#222;"></div>
<div style="left:54px;top:410.5px;width:592px;height:1.1px;background:#222;"></div>
<div style="left:54px;top:429.5px;width:592px;height:1.1px;background:#222;"></div>
<div style="left:54px;top:448.5px;width:592px;height:1.1px;background:#222;"></div>
<div style="left:54px;top:467.5px;width:592px;height:1.1px;background:#222;"></div>
<div style="left:54px;top:486.5px;width:592px;height:1.1px;background:#222;"></div>
<div style="left:54px;top:505.5px;width:592px;height:1.1px;background:#222;"></div>
<div style="left:54px;top:524.5px;width:592px;height:1.1px;background:#222;"></div>
<div style="left:209.8px;top:243.01px;font:bold 29px/29px 'Liberation Serif',serif;color:#ff0000;white-space:nowrap;transform:scaleX(1.0064);transform-origin:0 0;"><u style="text-decoration-thickness:2.8px;text-underline-offset:2.6px">ThuThuatPhanMem.vn</u></div>
<div style="left:56px;top:280.73px;font:normal 11.9px/11.9px 'Liberation Sans',sans-serif;color:#0000ff;white-space:nowrap;"><u>www.facebook.com/hocexcelcoban</u></div>
<div style="left:327.5px;top:279.03px;font:normal 13.7px/13.7px 'Liberation Serif',serif;color:#000;white-space:nowrap;-webkit-text-stroke:0.12px currentColor;">www</div>
<div style="left:54.0px;width:38px;text-align:center;top:319.77px;font:bold 14px/14px 'Liberation Serif',serif;color:#000;white-space:nowrap;-webkit-text-stroke:0.15px currentColor;">STT</div>
<div style="left:93.30000000000001px;width:110px;text-align:center;top:319.77px;font:bold 14px/14px 'Liberation Serif',serif;color:#000;white-space:nowrap;-webkit-text-stroke:0.15px currentColor;">Họ lót</div>
<div style="left:205.0px;width:80px;text-align:center;top:319.77px;font:bold 14px/14px 'Liberation Serif',serif;color:#000;white-space:nowrap;-webkit-text-stroke:0.15px currentColor;">Lương ngày</div>
<div style="left:284.5px;width:40px;text-align:center;top:300.77px;font:bold 14px/14px 'Liberation Serif',serif;color:#000;white-space:nowrap;-webkit-text-stroke:0.15px currentColor;">Số</div>
<div style="left:284.5px;width:40px;text-align:center;top:319.77px;font:bold 14px/14px 'Liberation Serif',serif;color:#000;white-space:nowrap;-webkit-text-stroke:0.15px currentColor;">ngày</div>
<div style="left:284.5px;width:40px;text-align:center;top:338.27px;font:bold 14px/14px 'Liberation Serif',serif;color:#000;white-space:nowrap;-webkit-text-stroke:0.15px currentColor;">công</div>
<div style="left:324.0px;width:85px;text-align:center;top:319.77px;font:bold 14px/14px 'Liberation Serif',serif;color:#000;white-space:nowrap;-webkit-text-stroke:0.15px currentColor;">Lương tháng</div>
<div style="left:408.0px;width:60px;text-align:center;top:319.77px;font:bold 14px/14px 'Liberation Serif',serif;color:#000;white-space:nowrap;-webkit-text-stroke:0.15px currentColor;">Chức vụ</div>
<div style="left:470px;top:319.77px;font:bold 14px/14px 'Liberation Serif',serif;color:#000;white-space:nowrap;-webkit-text-stroke:0.15px currentColor;">Thưởng</div>
<div style="left:520.5px;width:60px;text-align:center;top:310.47px;font:bold 14px/14px 'Liberation Serif',serif;color:#000;white-space:nowrap;-webkit-text-stroke:0.15px currentColor;">Phụ cấp</div>
<div style="left:520.5px;width:60px;text-align:center;top:329.27px;font:bold 14px/14px 'Liberation Serif',serif;color:#000;white-space:nowrap;-webkit-text-stroke:0.15px currentColor;">chức vụ</div>
<div style="left:54.0px;width:38px;text-align:center;top:358.27px;font:normal 14px/14px 'Liberation Serif',serif;color:#000;white-space:nowrap;-webkit-text-stroke:0.15px currentColor;">1</div>
<div style="left:94.6px;top:358.27px;font:normal 14px/14px 'Liberation Serif',serif;color:#000;white-space:nowrap;-webkit-text-stroke:0.15px currentColor;">Cao Văn Cốt</div>
<div style="right:418px;top:358.27px;font:normal 14px/14px 'Liberation Serif',serif;color:#000;white-space:nowrap;-webkit-text-stroke:0.15px currentColor;">50000</div>
<div style="right:379px;top:358.27px;font:normal 14px/14px 'Liberation Serif',serif;color:#000;white-space:nowrap;-webkit-text-stroke:0.15px currentColor;">26</div>
<div style="right:293px;top:358.27px;font:normal 14px/14px 'Liberation Serif',serif;color:#0000ff;white-space:nowrap;-webkit-text-stroke:0.15px currentColor;">1,300,000</div>
<div style="left:409.0px;width:58px;text-align:center;top:358.27px;font:normal 14px/14px 'Liberation Serif',serif;color:#000;white-space:nowrap;-webkit-text-stroke:0.15px currentColor;">GĐ</div>
<div style="right:181px;top:358.27px;font:normal 14px/14px 'Liberation Serif',serif;color:#008000;white-space:nowrap;-webkit-text-stroke:0.15px currentColor;">260,000</div>
<div style="right:123.5px;top:358.27px;font:normal 14px/14px 'Liberation Serif',serif;color:#ff00ff;white-space:nowrap;-webkit-text-stroke:0.15px currentColor;">250,000</div>
<div style="right:56.5px;top:358.27px;font:normal 14px/14px 'Liberation Serif',serif;color:#ff9900;white-space:nowrap;-webkit-text-stroke:0.15px currentColor;">1,810,000</div>
<div style="left:54.0px;width:38px;text-align:center;top:377.27px;font:normal 14px/14px 'Liberation Serif',serif;color:#000;white-space:nowrap;-webkit-text-stroke:0.15px currentColor;">2</div>
<div style="left:94.6px;top:377.27px;font:normal 14px/14px 'Liberation Serif',serif;color:#000;white-space:nowrap;-webkit-text-stroke:0.15px currentColor;">Bùi Thị Béo</div>
<div style="right:418px;top:377.27px;font:normal 14px/14px 'Liberation Serif',serif;color:#000;white-space:nowrap;-webkit-text-stroke:0.15px currentColor;">45000</div>
<div style="right:379px;top:377.27px;font:normal 14px/14px 'Liberation Serif',serif;color:#000;white-space:nowrap;-webkit-text-stroke:0.15px currentColor;">23</div>
<div style="right:293px;top:377.27px;font:normal 14px/14px 'Liberation Serif',serif;color:#0000ff;white-space:nowrap;-webkit-text-stroke:0.15px currentColor;">1,035,000</div>
<div style="left:409.0px;width:58px;text-align:center;top:377.27px;font:normal 14px/14px 'Liberation Serif',serif;color:#000;white-space:nowrap;-webkit-text-stroke:0.15px currentColor;">PGĐ</div>
<div style="right:181px;top:377.27px;font:normal 14px/14px 'Liberation Serif',serif;color:#008000;white-space:nowrap;-webkit-text-stroke:0.15px currentColor;">103,500</div>
<div style="right:123.5px;top:377.27px;font:normal 14px/14px 'Liberation Serif',serif;color:#ff00ff;white-space:nowrap;-webkit-text-stroke:0.15px currentColor;">200,000</div>
<div style="right:56.5px;top:377.27px;font:normal 14px/14px 'Liberation Serif',serif;color:#ff9900;white-space:nowrap;-webkit-text-stroke:0.15px currentColor;">1,338,500</div>
<div style="left:54.0px;width:38px;text-align:center;top:396.27px;font:normal 14px/14px 'Liberation Serif',serif;color:#000;white-space:nowrap;-webkit-text-stroke:0.15px currentColor;">3</div>
<div style="left:94.6px;top:396.27px;font:normal 14px/14px 'Liberation Serif',serif;color:#000;white-space:nowrap;-webkit-text-stroke:0.15px currentColor;">Đỗ Văn Đậu</div>
<div style="right:418px;top:396.27px;font:normal 14px/14px 'Liberation Serif',serif;color:#000;white-space:nowrap;-webkit-text-stroke:0.15px currentColor;">40000</div>
<div style="right:379px;top:396.27px;font:normal 14px/14px 'Liberation Serif',serif;color:#000;white-space:nowrap;-webkit-text-stroke:0.15px currentColor;">25</div>
<div style="right:293px;top:396.27px;font:normal 14px/14px 'Liberation Serif',serif;color:#0000ff;white-space:nowrap;-webkit-text-stroke:0.15px currentColor;">1,000,000</div>
<div style="left:409.0px;width:58px;text-align:center;top:396.27px;font:normal 14px/14px 'Liberation Serif',serif;color:#000;white-space:nowrap;-webkit-text-stroke:0.15px currentColor;">PGĐ</div>
<div style="right:181px;top:396.27px;font:normal 14px/14px 'Liberation Serif',serif;color:#008000;white-space:nowrap;-webkit-text-stroke:0.15px currentColor;">200,000</div>
<div style="right:123.5px;top:396.27px;font:normal 14px/14px 'Liberation Serif',serif;color:#ff00ff;white-space:nowrap;-webkit-text-stroke:0.15px currentColor;">200,000</div>
<div style="right:56.5px;top:396.27px;font:normal 14px/14px 'Liberation Serif',serif;color:#ff9900;white-space:nowrap;-webkit-text-stroke:0.15px currentColor;">1,400,000</div>
<div style="left:54.0px;width:38px;text-align:center;top:415.27px;font:normal 14px/14px 'Liberation Serif',serif;color:#000;white-space:nowrap;-webkit-text-stroke:0.15px currentColor;">4</div>
<div style="left:94.6px;top:415.27px;font:normal 14px/14px 'Liberation Serif',serif;color:#000;white-space:nowrap;-webkit-text-stroke:0.15px currentColor;">Nguyễn Văn Cam</div>
<div style="right:418px;top:415.27px;font:normal 14px/14px 'Liberation Serif',serif;color:#000;white-space:nowrap;-webkit-text-stroke:0.15px currentColor;">37000</div>
<div style="right:379px;top:415.27px;font:normal 14px/14px 'Liberation Serif',serif;color:#000;white-space:nowrap;-webkit-text-stroke:0.15px currentColor;">26</div>
<div style="right:293px;top:415.27px;font:normal 14px/14px 'Liberation Serif',serif;color:#0000ff;white-space:nowrap;-webkit-text-stroke:0.15px currentColor;">962,000</div>
<div style="left:409.0px;width:58px;text-align:center;top:415.27px;font:normal 14px/14px 'Liberation Serif',serif;color:#000;white-space:nowrap;-webkit-text-stroke:0.15px currentColor;">TP</div>
<div style="right:181px;top:415.27px;font:normal 14px/14px 'Liberation Serif',serif;color:#008000;white-space:nowrap;-webkit-text-stroke:0.15px currentColor;">192,400</div>
<div style="right:123.5px;top:415.27px;font:normal 14px/14px 'Liberation Serif',serif;color:#ff00ff;white-space:nowrap;-webkit-text-stroke:0.15px currentColor;">180,000</div>
<div style="right:56.5px;top:415.27px;font:normal 14px/14px 'Liberation Serif',serif;color:#ff9900;white-space:nowrap;-webkit-text-stroke:0.15px currentColor;">1,334,400</div>
<div style="left:54.0px;width:38px;text-align:center;top:434.27px;font:normal 14px/14px 'Liberation Serif',serif;color:#000;white-space:nowrap;-webkit-text-stroke:0.15px currentColor;">5</div>
<div style="left:94.6px;top:434.27px;font:normal 14px/14px 'Liberation Serif',serif;color:#000;white-space:nowrap;-webkit-text-stroke:0.15px currentColor;">Bạch Thị Tạng</div>
<div style="right:418px;top:434.27px;font:normal 14px/14px 'Liberation Serif',serif;color:#000;white-space:nowrap;-webkit-text-stroke:0.15px currentColor;">45000</div>
<div style="right:379px;top:434.27px;font:normal 14px/14px 'Liberation Serif',serif;color:#000;white-space:nowrap;-webkit-text-stroke:0.15px currentColor;">22</div>
<div style="right:293px;top:434.27px;font:normal 14px/14px 'Liberation Serif',serif;color:#0000ff;white-space:nowrap;-webkit-text-stroke:0.15px currentColor;">990,000</div>
<div style="left:409.0px;width:58px;text-align:center;top:434.27px;font:normal 14px/14px 'Liberation Serif',serif;color:#000;white-space:nowrap;-webkit-text-stroke:0.15px currentColor;">NV</div>
<div style="right:181px;top:434.27px;font:normal 14px/14px 'Liberation Serif',serif;color:#008000;white-space:nowrap;-webkit-text-stroke:0.15px currentColor;">99,000</div>
<div style="right:123.5px;top:434.27px;font:normal 14px/14px 'Liberation Serif',serif;color:#ff00ff;white-space:nowrap;-webkit-text-stroke:0.15px currentColor;">150,000</div>
<div style="right:56.5px;top:434.27px;font:normal 14px/14px 'Liberation Serif',serif;color:#ff9900;white-space:nowrap;-webkit-text-stroke:0.15px currentColor;">1,239,000</div>
<div style="left:54.0px;width:38px;text-align:center;top:453.27px;font:normal 14px/14px 'Liberation Serif',serif;color:#000;white-space:nowrap;-webkit-text-stroke:0.15px currentColor;">6</div>
<div style="left:94.6px;top:453.27px;font:normal 14px/14px 'Liberation Serif',serif;color:#000;white-space:nowrap;-webkit-text-stroke:0.15px currentColor;">Cao Thị Phúc</div>
<div style="right:418px;top:453.27px;font:normal 14px/14px 'Liberation Serif',serif;color:#000;white-space:nowrap;-webkit-text-stroke:0.15px currentColor;">40000</div>
<div style="right:379px;top:453.27px;font:normal 14px/14px 'Liberation Serif',serif;color:#000;white-space:nowrap;-webkit-text-stroke:0.15px currentColor;">20</div>
<div style="right:293px;top:453.27px;font:normal 14px/14px 'Liberation Serif',serif;color:#0000ff;white-space:nowrap;-webkit-text-stroke:0.15px currentColor;">800,000</div>
<div style="left:409.0px;width:58px;text-align:center;top:453.27px;font:normal 14px/14px 'Liberation Serif',serif;color:#000;white-space:nowrap;-webkit-text-stroke:0.15px currentColor;">NV</div>
<div style="right:181px;top:453.27px;font:normal 14px/14px 'Liberation Serif',serif;color:#008000;white-space:nowrap;-webkit-text-stroke:0.15px currentColor;">0</div>
<div style="right:123.5px;top:453.27px;font:normal 14px/14px 'Liberation Serif',serif;color:#ff00ff;white-space:nowrap;-webkit-text-stroke:0.15px currentColor;">150,000</div>
<div style="right:56.5px;top:453.27px;font:normal 14px/14px 'Liberation Serif',serif;color:#ff9900;white-space:nowrap;-webkit-text-stroke:0.15px currentColor;">950,000</div>
<div style="left:54.0px;width:38px;text-align:center;top:472.27px;font:normal 14px/14px 'Liberation Serif',serif;color:#000;white-space:nowrap;-webkit-text-stroke:0.15px currentColor;">7</div>
<div style="left:94.6px;top:472.27px;font:normal 14px/14px 'Liberation Serif',serif;color:#000;white-space:nowrap;-webkit-text-stroke:0.15px currentColor;">Phạm Thị Luật</div>
<div style="right:418px;top:472.27px;font:normal 14px/14px 'Liberation Serif',serif;color:#000;white-space:nowrap;-webkit-text-stroke:0.15px currentColor;">37000</div>
<div style="right:379px;top:472.27px;font:normal 14px/14px 'Liberation Serif',serif;color:#000;white-space:nowrap;-webkit-text-stroke:0.15px currentColor;">18</div>
<div style="right:293px;top:472.27px;font:normal 14px/14px 'Liberation Serif',serif;color:#0000ff;white-space:nowrap;-webkit-text-stroke:0.15px currentColor;">666,000</div>
<div style="left:409.0px;width:58px;text-align:center;top:472.27px;font:normal 14px/14px 'Liberation Serif',serif;color:#000;white-space:nowrap;-webkit-text-stroke:0.15px currentColor;">NV</div>
<div style="right:181px;top:472.27px;font:normal 14px/14px 'Liberation Serif',serif;color:#008000;white-space:nowrap;-webkit-text-stroke:0.15px currentColor;">0</div>
<div style="right:123.5px;top:472.27px;font:normal 14px/14px 'Liberation Serif',serif;color:#ff00ff;white-space:nowrap;-webkit-text-stroke:0.15px currentColor;">150,000</div>
<div style="right:56.5px;top:472.27px;font:normal 14px/14px 'Liberation Serif',serif;color:#ff9900;white-space:nowrap;-webkit-text-stroke:0.15px currentColor;">816,000</div>
<div style="left:54.0px;width:38px;text-align:center;top:491.27px;font:normal 14px/14px 'Liberation Serif',serif;color:#000;white-space:nowrap;-webkit-text-stroke:0.15px currentColor;">8</div>
<div style="left:94.6px;top:491.27px;font:normal 14px/14px 'Liberation Serif',serif;color:#000;white-space:nowrap;-webkit-text-stroke:0.15px currentColor;">Tạ Văn Tốn</div>
<div style="right:418px;top:491.27px;font:normal 14px/14px 'Liberation Serif',serif;color:#000;white-space:nowrap;-webkit-text-stroke:0.15px currentColor;">50000</div>
<div style="right:379px;top:491.27px;font:normal 14px/14px 'Liberation Serif',serif;color:#000;white-space:nowrap;-webkit-text-stroke:0.15px currentColor;">25</div>
<div style="right:293px;top:491.27px;font:normal 14px/14px 'Liberation Serif',serif;color:#0000ff;white-space:nowrap;-webkit-text-stroke:0.15px currentColor;">1,250,000</div>
<div style="left:409.0px;width:58px;text-align:center;top:491.27px;font:normal 14px/14px 'Liberation Serif',serif;color:#000;white-space:nowrap;-webkit-text-stroke:0.15px currentColor;">TP</div>
<div style="right:181px;top:491.27px;font:normal 14px/14px 'Liberation Serif',serif;color:#008000;white-space:nowrap;-webkit-text-stroke:0.15px currentColor;">250,000</div>
<div style="right:123.5px;top:491.27px;font:normal 14px/14px 'Liberation Serif',serif;color:#ff00ff;white-space:nowrap;-webkit-text-stroke:0.15px currentColor;">180,000</div>
<div style="right:56.5px;top:491.27px;font:normal 14px/14px 'Liberation Serif',serif;color:#ff9900;white-space:nowrap;-webkit-text-stroke:0.15px currentColor;">1,680,000</div>
<div style="left:54.0px;width:38px;text-align:center;top:510.27px;font:normal 14px/14px 'Liberation Serif',serif;color:#000;white-space:nowrap;-webkit-text-stroke:0.15px currentColor;">9</div>
<div style="left:94.6px;top:510.27px;font:normal 14px/14px 'Liberation Serif',serif;color:#000;white-space:nowrap;-webkit-text-stroke:0.15px currentColor;">Lương Thị Cao</div>
<div style="right:418px;top:510.27px;font:normal 14px/14px 'Liberation Serif',serif;color:#000;white-space:nowrap;-webkit-text-stroke:0.15px currentColor;">50000</div>
<div style="right:379px;top:510.27px;font:normal 14px/14px 'Liberation Serif',serif;color:#000;white-space:nowrap;-webkit-text-stroke:0.15px currentColor;">26</div>
<div style="right:293px;top:510.27px;font:normal 14px/14px 'Liberation Serif',serif;color:#0000ff;white-space:nowrap;-webkit-text-stroke:0.15px currentColor;">1,300,000</div>
<div style="left:409.0px;width:58px;text-align:center;top:510.27px;font:normal 14px/14px 'Liberation Serif',serif;color:#000;white-space:nowrap;-webkit-text-stroke:0.15px currentColor;">NV</div>
<div style="right:181px;top:510.27px;font:normal 14px/14px 'Liberation Serif',serif;color:#008000;white-space:nowrap;-webkit-text-stroke:0.15px currentColor;">260,000</div>
<div style="right:123.5px;top:510.27px;font:normal 14px/14px 'Liberation Serif',serif;color:#ff00ff;white-space:nowrap;-webkit-text-stroke:0.15px currentColor;">150,000</div>
<div style="right:56.5px;top:510.27px;font:normal 14px/14px 'Liberation Serif',serif;color:#ff9900;white-space:nowrap;-webkit-text-stroke:0.15px currentColor;">1,710,000</div>
<div style="left:466px;top:353px;width:2px;height:173px;background:#217346;"></div>
<div style="left:521.5px;top:353px;width:2px;height:173px;background:#217346;"></div>
<div style="left:466px;top:353px;width:57px;height:1.5px;background:#217346;"></div>
<div style="left:466px;top:524.5px;width:57px;height:1.5px;background:#217346;"></div>
<div style="left:520px;top:523px;width:5px;height:5px;background:#217346;border:1px solid #fff;"></div>
<div style="left:679px;top:222px;width:20px;height:308px;background:#dfdfdf;"></div>
<div style="left:679px;top:222px;width:1.6px;height:308px;background:#bdbdbd;"></div>
<div style="left:683px;top:237px;width:13px;height:139px;background:#fff;border:1px solid #c3c3c3;box-sizing:border-box;"></div>
<div style="left:683.5px;top:516.5px;width:12.5px;height:13.5px;background:#f5f5f5;"></div>
<svg style="position:absolute;left:685px;top:521.5px;" width="10" height="6" viewBox="0 0 10 6"><path d="M0.5 0.5h9l-4.5 5z" fill="#555"/></svg>
<div style="left:1px;top:530px;width:698px;height:25px;background:#e6e6e6;"></div>
<div style="left:1px;top:530px;width:698px;height:1px;background:#d0d0d0;"></div>
<svg style="position:absolute;left:24.5px;top:538.5px;" width="5" height="8" viewBox="0 0 5 8"><path d="M4.8 0.3v7.4L0.5 4z" fill="#1d5f38"/></svg>
<svg style="position:absolute;left:51px;top:538.5px;" width="5" height="8" viewBox="0 0 5 8"><path d="M0.2 0.3v7.4L4.5 4z" fill="#1d5f38"/></svg>
<div style="left:74.3px;top:543.8px;width:2px;height:2px;background:#1d5f38;"></div>
<div style="left:78.4px;top:543.8px;width:2px;height:2px;background:#1d5f38;"></div>
<div style="left:82.5px;top:543.8px;width:2px;height:2px;background:#1d5f38;"></div>
<div style="left:91.5px;top:530px;width:112px;height:22.5px;background:#fff;border-right:1px solid #c6c6c6;border-left:1px solid #c6c6c6;box-sizing:border-box;"></div>
<div style="left:92px;top:551px;width:111.5px;height:2px;background:#217346;"></div>
<div style="left:103.2px;top:536.27px;font:bold 11.5px/11.5px 'Liberation Sans',sans-serif;color:#217346;white-space:nowrap;transform:scaleX(0.9682);transform-origin:0 0;">BẢNG LƯƠNG 2</div>
<div style="left:215.8px;top:536.27px;font:normal 11.5px/11.5px 'Liberation Sans',sans-serif;color:#444;white-space:nowrap;transform:scaleX(0.9767);transform-origin:0 0;">BẢNG CT TT KH CỦA MỘT KS</div>
<div style="left:388px;top:533.5px;width:1px;height:17px;background:#c6c6c6;"></div>
<div style="left:403.2px;top:536.27px;font:normal 11.5px/11.5px 'Liberation Sans',sans-serif;color:#444;white-space:nowrap;transform:scaleX(0.9676);transform-origin:0 0;">KẾT QUẢ THI CUỐI KHÓA</div>
<div style="left:551px;top:543.8px;width:2px;height:2px;background:#1d5f38;"></div>
<div style="left:555px;top:543.8px;width:2px;height:2px;background:#1d5f38;"></div>
<div style="left:559px;top:543.8px;width:2px;height:2px;background:#1d5f38;"></div>
<svg style="position:absolute;left:572px;top:536px;" width="16" height="16" viewBox="0 0 16 16"><circle cx="8" cy="8" r="7.2" fill="none" stroke="#777" stroke-width="1.2"/><path d="M8 4v8 M4 8h8" stroke="#777" stroke-width="1.3"/></svg>
<svg style="position:absolute;left:605px;top:537px;" width="3" height="11" viewBox="0 0 3 11"><circle cx="1.5" cy="1.5" r="0.8" fill="#aaa"/><circle cx="1.5" cy="5.5" r="0.8" fill="#aaa"/><circle cx="1.5" cy="9.5" r="0.8" fill="#aaa"/></svg>
<div style="left:621.5px;top:535.5px;width:60px;height:14px;background:#fff;border:1px solid #c3c3c3;box-sizing:border-box;"></div>
<div style="left:634.5px;top:535.5px;width:1px;height:14px;background:#c3c3c3;"></div>
<div style="left:662.5px;top:535.5px;width:5.5px;height:14px;background:#e6e6e6;"></div>
<div style="left:667.5px;top:535.5px;width:1px;height:14px;background:#c3c3c3;"></div>
<div style="left:662px;top:535.5px;width:1px;height:14px;background:#c3c3c3;"></div>
<svg style="position:absolute;left:625px;top:539px;" width="5" height="7" viewBox="0 0 5 7"><path d="M4.5 0.5v6l-4-3z" fill="#444"/></svg>
<svg style="position:absolute;left:672px;top:539px;" width="5" height="7" viewBox="0 0 5 7"><path d="M0.5 0.5v6l4-3z" fill="#444"/></svg>
<div style="left:1px;top:555px;width:698px;height:21px;background:#f1f1f1;"></div>
<div style="left:1px;top:555px;width:698px;height:1px;background:#dadada;"></div>
<div style="left:8.4px;top:559.09px;font:normal 11px/11px 'Liberation Sans',sans-serif;color:#444;white-space:nowrap;transform:scaleX(0.8806);transform-origin:0 0;">Ready</div>
<svg style="position:absolute;left:53px;top:558px;" width="14" height="14" viewBox="0 0 14 14"><rect x="2.5" y="4.5" width="10.5" height="8.5" fill="#fff" stroke="#555"/><path d="M2.5 7.3h10.5 M2.5 10.1h10.5 M6 4.5v8.5 M9.5 4.5v8.5" stroke="#555" stroke-width="0.9"/><circle cx="4" cy="3.2" r="2.6" fill="#555"/><rect x="7" y="1.5" width="6" height="2.5" fill="#555"/></svg>
<div style="left:196.3px;top:559.09px;font:normal 11px/11px 'Liberation Sans',sans-serif;color:#444;white-space:nowrap;transform:scaleX(0.9051);transform-origin:0 0;">Average: 151,656</div>
<div style="left:289.5px;top:559.09px;font:normal 11px/11px 'Liberation Sans',sans-serif;color:#444;white-space:nowrap;transform:scaleX(0.9667);transform-origin:0 0;">Count: 9</div>
<div style="left:343.7px;top:559.09px;font:normal 11px/11px 'Liberation Sans',sans-serif;color:#444;white-space:nowrap;transform:scaleX(0.8923);transform-origin:0 0;">Sum: 1,364,900</div>
<div style="left:429px;top:556px;width:34.5px;height:20px;background:#d4d4d4;"></div>
<svg style="position:absolute;left:440px;top:560px;" width="13" height="12" viewBox="0 0 13 12"><rect x="0.5" y="0.5" width="12" height="11" fill="none" stroke="#666"/><path d="M0.5 4h12 M0.5 8h12 M4.5 0.5v11 M8.5 0.5v11" stroke="#666" stroke-width="0.9"/></svg>
<svg style="position:absolute;left:475px;top:560px;" width="13" height="12" viewBox="0 0 13 12"><rect x="0.5" y="0.5" width="12" height="11" fill="none" stroke="#666"/><rect x="3" y="2.5" width="7" height="7" fill="none" stroke="#666" stroke-width="0.9"/><path d="M4.5 5h4 M4.5 7h4" stroke="#666" stroke-width="0.8"/></svg>
<svg style="position:absolute;left:509px;top:560px;" width="13" height="12" viewBox="0 0 13 12"><path d="M0.5 0.5h12v11h-12z M0.5 7h6v-6.5" fill="none" stroke="#666"/></svg>
<div style="left:538px;top:564.5px;width:5px;height:1.3px;background:#555;"></div>
<div style="left:546px;top:564.5px;width:92px;height:1px;background:#999;"></div>
<div style="left:590.5px;top:559.5px;width:4.5px;height:9.5px;background:#777;"></div>
<div style="left:641px;top:564.5px;width:7px;height:1.3px;background:#555;"></div>
<div style="left:643.85px;top:561.5px;width:1.3px;height:7px;background:#555;"></div>
<div style="left:657px;top:559.09px;font:normal 11px/11px 'Liberation Sans',sans-serif;color:#444;white-space:nowrap;transform:scaleX(0.8957);transform-origin:0 0;">100%</div>
<div style="left:0px;top:575px;width:700px;height:1px;background:#217346;"></div>
<div style="left:453.5px;top:124.5px;width:161.5px;height:69px;background:#fff;border:1px solid #c6c6c6;box-sizing:border-box;box-shadow:1px 2px 3px rgba(0,0,0,0.18);"></div>
<div style="left:456px;top:127px;width:157px;height:21.5px;background:linear-gradient(#a8a8a8, #c4c4c4 35%, #c8c8c8);"></div>
<div style="left:455px;top:125px;width:159.5px;height:25px;background:none;border:3px solid #f43b3b;box-sizing:border-box;box-shadow:0 0 1px 0.5px #cfe3e3;"></div>
<svg style="position:absolute;left:458px;top:131px;" width="17" height="15" viewBox="0 0 17 15"><rect x="1" y="3" width="7.5" height="3.3" rx="1" fill="#fff" stroke="#6b6b6b" stroke-width="0.9"/><rect x="1" y="9.5" width="7.5" height="3.3" rx="1" fill="#fff" stroke="#6b6b6b" stroke-width="0.9"/><path d="M8.3 4.3l2.2 2.2 4.6-5.2" fill="none" stroke="#4aa073" stroke-width="1.5"/><circle cx="11.3" cy="11.2" r="3" fill="none" stroke="#d9582b" stroke-width="1.4"/><path d="M9.3 9.2l4 4" stroke="#d9582b" stroke-width="1.3"/></svg>
<div style="left:484px;top:132.44px;font:normal 10.7px/10.7px 'Liberation Sans',sans-serif;color:#262626;white-space:nowrap;">Data <u>V</u>alidation...</div>
<svg style="position:absolute;left:458px;top:153px;" width="17" height="14" viewBox="0 0 17 14"><path d="M0.5 0.5v13h16 M0.5 0.5h16 M0.5 4.5h16 M0.5 9h16 M4.5 0.5v13 M10 0.5v13" fill="none" stroke="#8a8a8a" stroke-width="0.9"/><path d="M0.5 13.5h16" stroke="#555" stroke-width="1.2"/><path d="M0.5 0.5h16" stroke="#555" stroke-width="1.2"/><ellipse cx="9.5" cy="6.8" rx="5.6" ry="3.4" fill="#fff" stroke="#d9582b" stroke-width="1.3"/><path d="M7 6.8h5" stroke="#555" stroke-width="1.1"/></svg>
<div style="left:484px;top:154.47px;font:normal 10.9px/10.9px 'Liberation Sans',sans-serif;color:#555;white-space:nowrap;">Ci<u>r</u>cle Invalid Data</div>
<svg style="position:absolute;left:458px;top:174.5px;" width="17" height="16" viewBox="0 0 17 16"><path d="M0.5 0.5v13h7 M0.5 0.5h16 M0.5 4.5h16 M0.5 9h16 M4.5 0.5v13 M10 0.5v5" fill="none" stroke="#8a8a8a" stroke-width="0.9"/><path d="M0.5 0.5h16 M0.5 13.5h7" stroke="#555" stroke-width="1.2"/><ellipse cx="9" cy="6.2" rx="5.4" ry="3.2" fill="#fff" stroke="#d9582b" stroke-width="1.3"/><path d="M7 6.2h4" stroke="#555" stroke-width="1"/><path d="M6.5 13.5l6.5-6 3 3-6.5 6z" fill="#e57b9a"/></svg>
<div style="left:484px;top:175.07px;font:normal 10.9px/10.9px 'Liberation Sans',sans-serif;color:#555;white-space:nowrap;">Clea<u>r</u> Validation Circles</div>
<div style="left:507px;top:163px;width:195px;height:173px;background:#fff;border:1px solid #c8c8c8;box-sizing:border-box;box-shadow:0 1px 4px rgba(0,0,0,0.15);"></div>
<div style="left:518.4px;top:172.06px;font:bold 10.56px/10.56px 'Liberation Sans',sans-serif;color:#444;white-space:nowrap;">Data Validation</div>
<div style="left:518.4px;top:194.52px;font:normal 11.2px/11.2px 'Liberation Sans',sans-serif;color:#444;white-space:nowrap;transform:scaleX(0.9922);transform-origin:0 0;">Pick from a list of rules to limit the</div>
<div style="left:518.4px;top:207.72px;font:normal 11.2px/11.2px 'Liberation Sans',sans-serif;color:#444;white-space:nowrap;transform:scaleX(0.9647);transform-origin:0 0;">type of data that can be entered in a</div>
<div style="left:518.4px;top:220.92px;font:normal 11.2px/11.2px 'Liberation Sans',sans-serif;color:#444;white-space:nowrap;">cell.</div>
<div style="left:518.4px;top:248.52px;font:normal 11.2px/11.2px 'Liberation Sans',sans-serif;color:#444;white-space:nowrap;transform:scaleX(0.9558);transform-origin:0 0;">For example, you can provide a list</div>
<div style="left:518.4px;top:262.22px;font:normal 11.2px/11.2px 'Liberation Sans',sans-serif;color:#444;white-space:nowrap;transform:scaleX(0.9497);transform-origin:0 0;">of values, like 1, 2, and 3, or only</div>
<div style="left:518.4px;top:275.92px;font:normal 11.2px/11.2px 'Liberation Sans',sans-serif;color:#444;white-space:nowrap;transform:scaleX(0.9514);transform-origin:0 0;">allow numbers greater than 1000 as</div>
<div style="left:518.4px;top:289.52px;font:normal 11.2px/11.2px 'Liberation Sans',sans-serif;color:#444;white-space:nowrap;transform:scaleX(0.9622);transform-origin:0 0;">valid entries.</div>
<div style="left:512px;top:307px;width:185px;height:1px;background:#dcdcdc;"></div>
<svg style="position:absolute;left:517px;top:315px;" width="15" height="15" viewBox="0 0 15 15"><circle cx="7.5" cy="7.5" r="7.2" fill="#2e6db3"/><path d="M5.2 5.6a2.4 2.3 0 1 1 3.4 2.1c-0.7 0.4-1 0.8-1 1.7" fill="none" stroke="#fff" stroke-width="1.7"/><circle cx="7.6" cy="11.6" r="1" fill="#fff"/></svg>
<div style="left:539.8px;top:316.66px;font:bold 10.8px/10.8px 'Liberation Sans',sans-serif;color:#2e5e9b;white-space:nowrap;">Tell me more</div>
<svg style="position:absolute;left:425px;top:40px;filter:drop-shadow(-1.5px 1.5px 1.5px rgba(0,0,0,0.35));" width="80" height="85" viewBox="0 0 80 85"><path d="M12.5 11 L56 57" stroke="#ef3b3b" stroke-width="9.5" stroke-linecap="butt"/><path d="M44.5 65.5 L65.5 47 L73.6 78.5 Z" fill="#ef3b3b"/></svg>
<svg style="position:absolute;left:505px;top:144px;" width="14" height="20" viewBox="0 0 14 20"><path d="M1 1v15l3.5-3.5 2.5 5.5 2.2-1-2.5-5.5h5z" fill="#fff" stroke="#000" stroke-width="1"/></svg>
</div></body></html>
